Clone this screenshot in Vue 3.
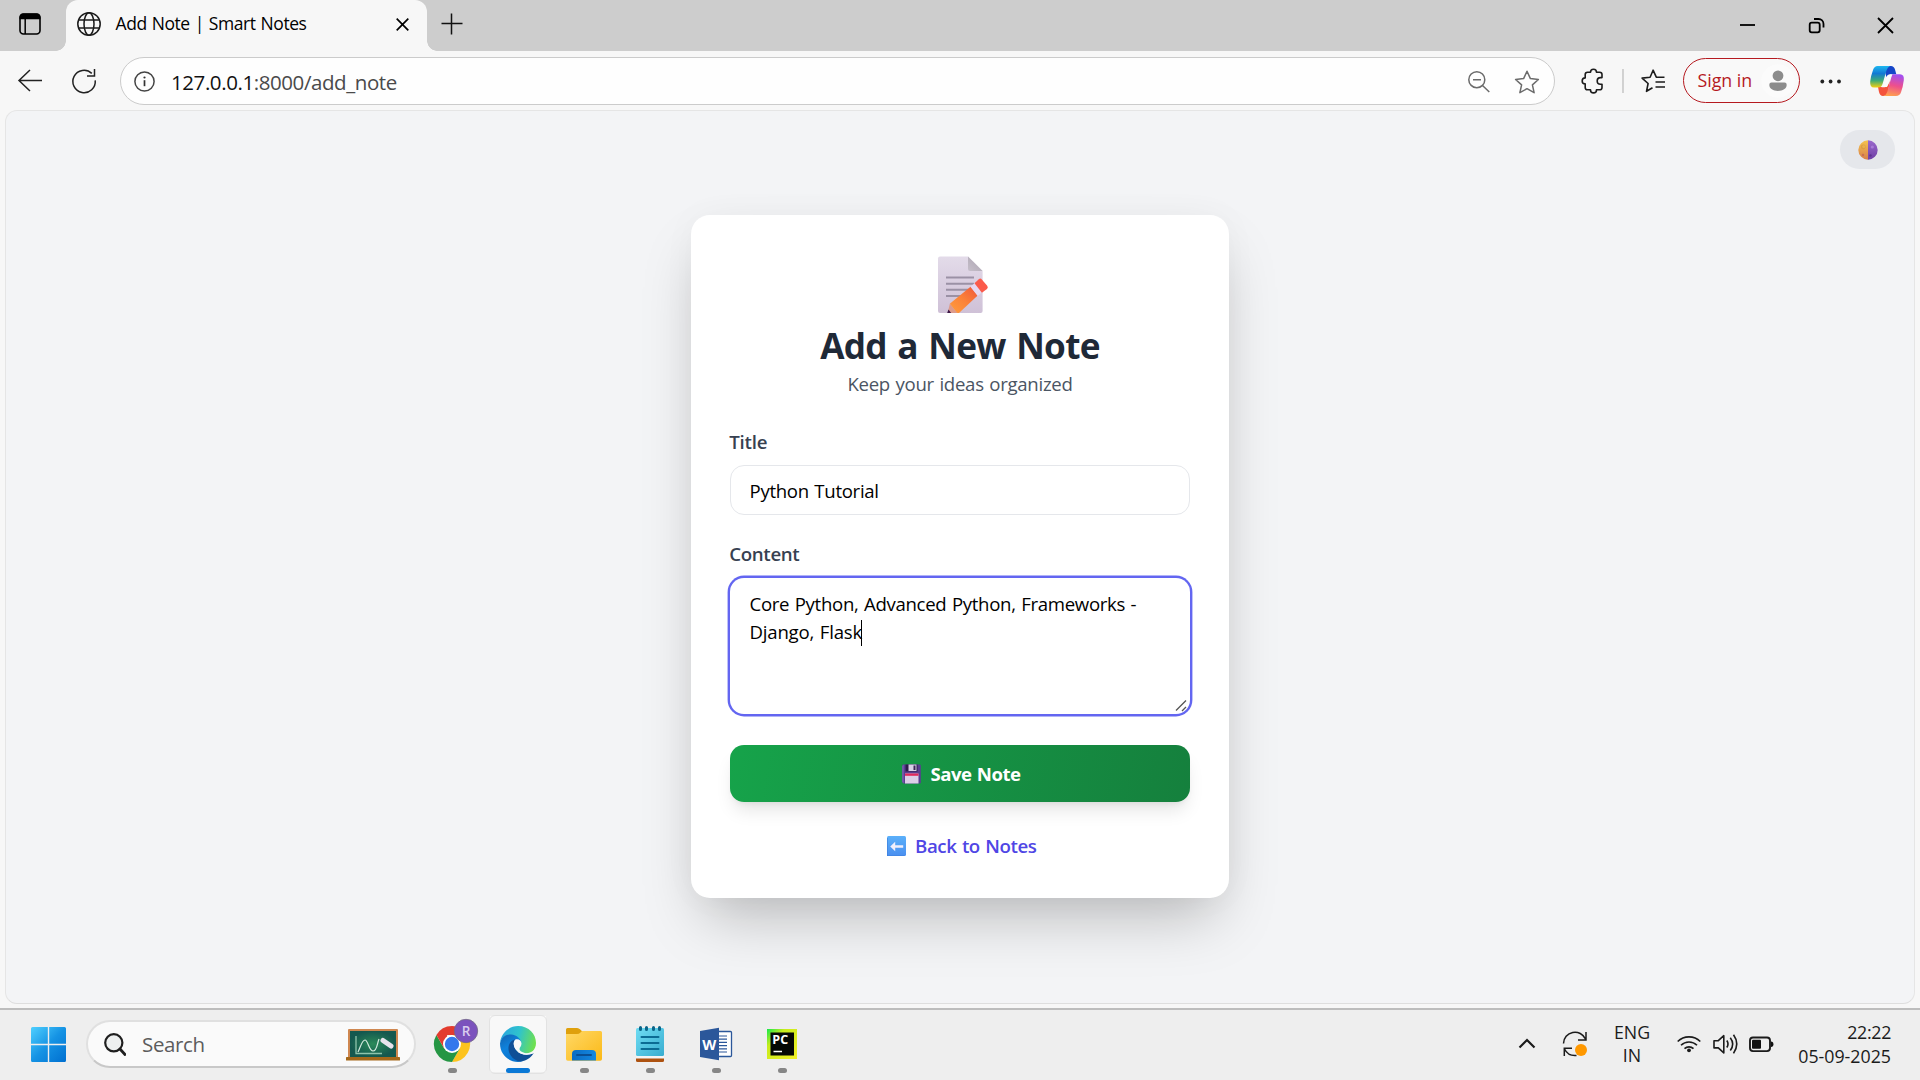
<script setup>
import { ref } from 'vue'

const title = ref('Python Tutorial')
const contentLines = ['Core Python, Advanced Python, Frameworks -', 'Django, Flask']
</script>

<template>
  <div class="screen">
    <!-- Tab strip -->
    <header class="tabstrip">
      <div class="tab-actions">
        <svg width="22" height="22" viewBox="0 0 22 22">
          <rect x="1" y="1" width="20" height="20" rx="3.5" fill="none" stroke="#000" stroke-width="1.6" />
          <path d="M.6 6.2V4A3.6 3.6 0 0 1 4.200.4h13.600A3.600 3.600 0 0 1 21.400 4v2.200z" fill="#000" />
          <path d="M6.200 6v15" stroke="#000" stroke-width="1.500" />
        </svg>
      </div>
      <div class="tab">
        <svg class="globe" width="24" height="24" viewBox="0 0 24 24" fill="none" stroke="#1b1b1b" stroke-width="1.500">
          <circle cx="12" cy="12" r="11.200" />
          <ellipse cx="12" cy="12" rx="5" ry="11.200" />
          <path d="M1.800 8h20.400M1.800 16h20.400" />
        </svg>
        <span class="tab-title">Add Note | Smart Notes</span>
        <svg class="tab-close" width="13" height="13" viewBox="0 0 13 13"><path d="M.7.7l11.600 11.600M12.300.7L.7 12.300" stroke="#000" stroke-width="1.700" /></svg>
      </div>
      <svg class="plus" width="22" height="22" viewBox="0 0 22 22"><path d="M.5 10.500h21M10.500.5v21" stroke="#111" stroke-width="1.500" /></svg>
      <div class="window-controls">
        <svg width="69" height="51" viewBox="0 0 69 51"><path d="M27 25h15" stroke="#000" stroke-width="1.800" /></svg>
        <svg width="69" height="51" viewBox="0 0 69 51" fill="none" stroke="#000" stroke-width="1.800">
          <rect x="27.700" y="22.700" width="10" height="9.600" rx="2" />
          <path d="M32 19h4.500a5 5 0 0 1 5 5v3.500" />
        </svg>
        <svg width="69" height="51" viewBox="0 0 69 51"><path d="M27 18l15 15M42 18l-15 15" stroke="#000" stroke-width="1.800" /></svg>
      </div>
    </header>

    <!-- Toolbar -->
    <div class="toolbar">
      <svg width="120" height="59" viewBox="0 51 120 59" fill="none" stroke="#222" stroke-width="1.500">
        <path d="M42 80.500H19M30 70L19 80.500 30 91" />
        <path d="M91.800 73.400A11.200 11.200 0 1 0 95.200 80.300" />
        <path d="M94.500 69v7h-7.500" />
      </svg>
      <div class="address">
        <svg width="21" height="21" viewBox="0 0 21 21">
          <circle cx="10.500" cy="10.500" r="9.600" fill="none" stroke="#444" stroke-width="1.500" />
          <path d="M10.500 9.200v6" stroke="#333" stroke-width="1.700" /><circle cx="10.500" cy="6.500" r="1.100" fill="#333" />
        </svg>
        <span class="url"><span class="host">127.0.0.1</span>:8000/add_note</span>
        <svg class="address-icons" width="74" height="28" viewBox="1467 66 74 28" fill="none" stroke="#6b6b6b" stroke-width="1.500">
          <circle cx="1476.800" cy="78.700" r="8" /><path d="M1473 78.700h8M1482.500 84.500l6.800 6.500" />
          <path stroke-linejoin="round" d="M1527 70.300l3.400 7.300 8 .9-6 5.400 1.700 7.800-7.100-4-7.100 4 1.700-7.800-6-5.400 8-.9z" />
        </svg>
      </div>
      <svg class="ext-icons" width="127" height="59" viewBox="1556 51 127 59" fill="none" stroke="#1c1c1c" stroke-width="1.600" stroke-linejoin="round">
        <path d="M1587.500 72.300h3a3 3 0 0 1 6 0h3.200q2.300 0 2.300 2.300v3h-1.500a3.300 3.300 0 0 0 0 6.600h1.500v3.200q0 2.300-2.300 2.300h-3.200v.2a3 3 0 0 1-6 0v-.2h-3q-2.300 0-2.300-2.300v-3.500a3 3 0 0 1 0-6v-3.300q0-2.300 2.300-2.300z" />
        <path d="M1623 69v24" stroke="#cdcdcd" stroke-width="1.800" />
        <path d="M1652.500 87.700l-6 3.600 1.600-7.800-6-5.400 8-.9 3-7 3.200 7h8.200M1655.500 82h9.500M1655.500 87h9.500" />
      </svg>
      <div class="signin">
        <span>Sign in</span>
        <svg width="34" height="34" viewBox="0 0 34 34">
          <circle cx="17" cy="17" r="16.700" fill="#fbfbfb" />
          <circle cx="17" cy="11.800" r="5.400" fill="#8c8c8c" />
          <path d="M10.500 18.600h13q2.200 0 2.200 2.200c0 4-4 6.200-8.700 6.200s-8.700-2.200-8.700-6.200q0-2.200 2.200-2.200z" fill="#8c8c8c" />
        </svg>
      </div>
      <svg width="120" height="59" viewBox="1800 51 120 59">
        <defs>
          <linearGradient id="cp1" x1="0" y1="0" x2="0" y2="1"><stop offset="0" stop-color="#1db8f0" /><stop offset=".35" stop-color="#1279d4" /><stop offset=".68" stop-color="#3dab78" /><stop offset="1" stop-color="#f5d011" /></linearGradient>
          <linearGradient id="cp2" x1=".5" y1="0" x2=".3" y2="1"><stop offset="0" stop-color="#a34ff0" /><stop offset=".5" stop-color="#ee4f8c" /><stop offset="1" stop-color="#ffa34d" /></linearGradient>
        </defs>
        <g fill="#222"><circle cx="1822.300" cy="81.500" r="1.900" /><circle cx="1830.600" cy="81.500" r="1.900" /><circle cx="1839" cy="81.500" r="1.900" /></g>
        <path d="M1884 66h7q3 0 4 3.500l1.300 4.700h-6q-3 0-4 3z" fill="#1546c8" />
        <path d="M1878 87h9l3-6-2 11q-1 4-5 4-3 0-4-4z" fill="#f4533c" />
        <path d="M1877.500 66h12.500q-2.500 1-3.500 4.500l-4 13.500q-1 3.500-4.500 3.500h-4q-4.300 0-3.800-6 .7-6 3-12 1.300-3.500 4.300-3.500z" fill="url(#cp1)" />
        <path d="M1892.500 74.200h7.500q4.500 0 3.800 6-.8 6.500-2.800 12-1.300 3.800-5 3.800h-12.500q2.800-1 3.700-4l4-14.300q.6-2 1.300-3.500z" fill="url(#cp2)" />
        <path d="M1888.500 75.500q1-1.300 3.500-1.300-1.500 1.300-2.200 4l-1.800 6q-1 3-3.500 3h-3q1.700-1 2.500-3.500l2-5.700q.8-2 2.500-2.500z" fill="#fafafa" />
      </svg>
    </div>

    <!-- Page -->
    <main class="viewport">
      <button class="theme-toggle" aria-label="Toggle theme">
        <svg width="20" height="20" viewBox="0 0 20 20">
          <defs>
            <linearGradient id="moonL" x1="0" y1="0" x2="0" y2="1"><stop offset="0" stop-color="#f5c34e" /><stop offset="1" stop-color="#d8804c" /></linearGradient>
            <linearGradient id="moonR" x1="0" y1="0" x2="0" y2="1"><stop offset="0" stop-color="#9a69cc" /><stop offset="1" stop-color="#6f3fa5" /></linearGradient>
          </defs>
          <path d="M10 .3a9.700 9.700 0 0 0 0 19.400z" fill="url(#moonL)" /><path d="M10 .3a9.700 9.700 0 0 1 0 19.400z" fill="url(#moonR)" />
          <circle cx="5.300" cy="7" r="2.400" fill="#dc9d42" /><circle cx="5.700" cy="6.600" r="1.500" fill="#eab24c" /><circle cx="5" cy="15" r="1.200" fill="#c86f52" />
          <circle cx="14.300" cy="7" r="1.600" fill="#a87bd6" /><circle cx="12.500" cy="15.500" r="1.200" fill="#5e3391" />
        </svg>
      </button>

      <section class="card">
        <svg class="memo" width="52" height="58" viewBox="937 256 52 58">
          <defs>
            <linearGradient id="sheet" x1="0" y1="0" x2="0" y2="1"><stop offset="0" stop-color="#e3dbe9" /><stop offset="1" stop-color="#cfc1d7" /></linearGradient>
            <linearGradient id="fold" x1="0" y1="1" x2="1" y2="0"><stop offset="0" stop-color="#c6bfca" /><stop offset="1" stop-color="#aaa2af" /></linearGradient>
            <linearGradient id="barrel" x1="0" y1="1" x2="1" y2="0"><stop offset="0" stop-color="#ff9d3d" /><stop offset=".5" stop-color="#fb8238" /><stop offset="1" stop-color="#f0563c" /></linearGradient>
            <clipPath id="memoClip"><path d="M937 256h52v57h-52z" /></clipPath>
          </defs>
          <g clip-path="url(#memoClip)">
            <path d="M940 256.500h28l14.600 14.500v40q0 2-2 2H940q-2 0-2-2v-52.500q0-2 2-2z" fill="url(#sheet)" />
            <path d="M968 256.500l14.600 14.500H970q-2 0-2-2z" fill="url(#fold)" />
            <path d="M946 277.500h28M946 283.700h28M946 289.700h24M946 296h18" stroke="#9b91a5" stroke-width="2" />
            <path d="M949.800 303.800l7.500 8.700-1.500 3.500-9 1z" fill="#dd9b8c" />
            <path d="M948.500 309.500l3 4-5 1.500z" fill="#3c1747" />
            <path d="M949.800 303.800l20.700-17 7.200 8.700-18.700 17.500h-1.700z" fill="url(#barrel)" />
            <path d="M970.500 286.800l4-3.600 7.400 9-4.200 3.800z" fill="#e6d8f1" />
            <path d="M974.500 283.200l4.300-4q1.600-1.300 3 .2l5.400 6.300q1.300 1.700-.2 3.200l-5.100 3.800z" fill="#fb5b4b" />
          </g>
        </svg>
        <h1>Add a New Note</h1>
        <p class="sub">Keep your ideas organized</p>

        <label class="label-title">Title</label>
        <div class="field">{{ title }}</div>

        <label class="label-content">Content</label>
        <div class="area">
          <div class="line">{{ contentLines[0] }}</div>
          <div class="line"><span class="last">{{ contentLines[1] }}</span><i class="caret"></i></div>
          <svg class="grip" width="13" height="13" viewBox="0 0 13 13" stroke="#555" stroke-width="1.300"><path d="M1 11.500L11 1.500M7 12l4-4" /></svg>
        </div>

        <button class="save">
          <svg width="19" height="20" viewBox="0 0 19 20">
            <path d="M1.500.5h16q1.300 0 1.300 1.300v16.400q0 1.300-1.300 1.300h-16L.2 18V1.800Q.2.5 1.500.5z" fill="#5a3e91" />
            <path d="M.2 2v16l1.500 1.500V.5z" fill="#7a5fb0" />
            <path d="M3.500.5h12v7h-12z" fill="#2c1b4a" /><path d="M6.500.5h8v6.500h-8z" fill="#d9cfe6" /><path d="M11.500 1.500h2v4.500h-2z" fill="#3a2755" />
            <path d="M3 9.500h13.500v10H3z" fill="#dccfe8" /><path d="M3 9.500h13.500v2.300H3z" fill="#e0295c" />
          </svg>
          <span>Save Note</span>
        </button>

        <a class="back">
          <svg width="19" height="20" viewBox="0 0 19 20">
            <defs><linearGradient id="arrowBg" x1="0" y1="0" x2="0" y2="1"><stop offset="0" stop-color="#5bb0fa" /><stop offset="1" stop-color="#4a8ff0" /></linearGradient></defs>
            <rect width="19" height="20" rx="1.500" fill="url(#arrowBg)" /><path d="M0 2v16.500q0 1.500 1.500 1.500h16" fill="none" stroke="#3b7edb" stroke-width="1.200" />
            <path d="M3.200 10.500l5-4.700v3.400h8v2.600h-8v3.400z" fill="#f1effb" />
          </svg>
          <span>Back to Notes</span>
        </a>
      </section>
    </main>

    <!-- Taskbar -->
    <footer class="taskbar">
      <svg class="start" width="35" height="35" viewBox="0 0 35 35">
        <defs><linearGradient id="win" x1="0" y1="0" x2="1" y2="1"><stop offset="0" stop-color="#4fd0ff" /><stop offset=".5" stop-color="#1593e4" /><stop offset="1" stop-color="#006fd0" /></linearGradient></defs>
        <path d="M1.500 0h15.300v16.800H0V1.500Q0 0 1.500 0zM18.200 0h15.300Q35 0 35 1.500v15.300H18.200zM0 18.200h16.800V35H1.500Q0 35 0 33.500zM18.200 18.200H35v15.300q0 1.500-1.500 1.500H18.200z" fill="url(#win)" />
      </svg>

      <div class="search">
        <svg width="22" height="23" viewBox="0 0 22 23" fill="none" stroke="#1f1f1f"><circle cx="9.800" cy="9.800" r="8.600" fill="#eef0f0" stroke-width="2.200" /><path d="M16 16l5 5.500" stroke-width="2.800" stroke-linecap="round" /></svg>
        <span>Search</span>
        <svg class="board" width="54" height="32" viewBox="0 0 54 32">
          <defs><radialGradient id="green"><stop offset="0" stop-color="#2b8a59" /><stop offset="1" stop-color="#14584f" /></radialGradient></defs>
          <rect x="2" width="50" height="30" rx="1" fill="#cf8750" /><rect x="4" y="2" width="46" height="26" fill="url(#green)" />
          <rect y="28" width="54" height="3.500" rx=".6" fill="#a5681a" />
          <path d="M10 7v17.500h26" fill="none" stroke="#8ec4ac" stroke-width="1.300" />
          <path d="M12 23c3-6 4-12 7-12s4 11 8 11 4-7 6-12" fill="none" stroke="#d5eadf" stroke-width="1.200" />
          <path d="M37 11.500l8 5.500" stroke="#e6e3ec" stroke-width="5" stroke-linecap="round" />
        </svg>
      </div>

      <div class="apps">
        <div class="app">
          <svg width="66" height="70" viewBox="419 1010 66 70">
            <path d="M436.400 1035A18 18 0 0 1 467.600 1035H452z" fill="#e33b2e" />
            <path d="M467.600 1035A18 18 0 0 1 452 1062l7.800-13.500L452 1035z" fill="#fcc31e" />
            <path d="M452 1062A18 18 0 0 1 436.400 1035l7.800 13.500 15.600 0z" fill="#259644" />
            <path d="M436.400 1035l7.800 13.500 3-13.500z" fill="#e33b2e" />
            <circle cx="452" cy="1044" r="9" fill="#fff" /><circle cx="452" cy="1044" r="7.200" fill="#3478ec" />
            <circle cx="466" cy="1031" r="11.700" fill="#7b52bd" stroke="#736a86" stroke-width=".8" />
            <text x="466" y="1036.200" text-anchor="middle" class="badge">R</text>
            <rect x="448" y="1068" width="9" height="5" rx="2.500" fill="#868686" />
          </svg>
        </div>
        <div class="app active">
          <svg width="66" height="70" viewBox="485 1010 66 70">
            <defs>
              <linearGradient id="edTop" x1="0" y1=".3" x2="1" y2=".5"><stop offset="0" stop-color="#2aa5df" /><stop offset=".5" stop-color="#2fc3cd" /><stop offset="1" stop-color="#6fe04e" /></linearGradient>
              <linearGradient id="edLeft" x1="0" y1="0" x2=".5" y2="1"><stop offset="0" stop-color="#1263b0" /><stop offset=".5" stop-color="#0f82dc" /><stop offset="1" stop-color="#0a72cc" /></linearGradient>
            </defs>
            <path d="M500 1043C501 1033 509 1026 518 1026C529 1026 536 1034 536 1043C536 1050 531 1053.500 525 1053.500C520 1053.500 515 1051 515 1050C519 1047 518 1038 511 1035.500C506 1034 501 1038 500 1043Z" fill="url(#edTop)" />
            <path d="M500 1043.500C501 1037 506 1034 511 1034.500C517 1035 521 1039 521.500 1043C517 1037 512 1042 512 1048C512 1056 518 1061 523 1061.200C512 1064.500 500 1056.500 500 1043.500Z" fill="url(#edLeft)" />
            <path d="M515 1039.500C509 1041 507.500 1047 509 1052C511 1058 517 1062 522 1061.300C528 1060 532 1056.500 533.700 1053C529 1055.500 521 1055.500 517 1051C514 1048 512.500 1043 515 1039.500Z" fill="#0f4f96" />
            <path d="M515 1039.700C518.500 1038.500 521.500 1040.500 521.500 1043.500C521.500 1046 519.500 1047.500 519.500 1049C519.500 1051 523 1053 527 1053.400C530 1053.500 533 1052.200 534 1051.700L533.700 1053C529 1055.500 521 1055.500 517 1051C514 1048 512.500 1043 515 1039.700Z" fill="#f8f8f8" />
            <rect x="506" y="1068" width="24" height="5" rx="2.500" fill="#0a78d6" />
          </svg>
        </div>
        <div class="app">
          <svg width="66" height="70" viewBox="551 1010 66 70">
            <defs><linearGradient id="fold2" x1="0" y1="0" x2="1" y2="1"><stop offset="0" stop-color="#ffd866" /><stop offset="1" stop-color="#fbb917" /></linearGradient>
            <linearGradient id="tray" x1="0" y1="0" x2="1" y2="0"><stop offset="0" stop-color="#0a6cc4" /><stop offset="1" stop-color="#1488e0" /></linearGradient></defs>
            <path d="M566 1029.500q0-1.500 1.500-1.500h9.500q2 0 3.300 1.500l2 2-3 4H566z" fill="#dfa00c" />
            <path d="M566 1034h11q2 0 3.500-1.500l1.500-1.500h18.500q1.500 0 1.500 1.500v26.500q0 1.800-1.800 1.800h-32.400q-1.800 0-1.800-1.800z" fill="url(#fold2)" />
            <path d="M572 1060.500v-6.500q0-4 4-4h16q4 0 4 4v6.500z" fill="url(#tray)" /><path d="M577 1055h14" stroke="#0a4f94" stroke-width="2" stroke-linecap="round" />
            <rect x="580" y="1068" width="9" height="5" rx="2.500" fill="#868686" />
          </svg>
        </div>
        <div class="app">
          <svg width="66" height="70" viewBox="617 1010 66 70">
            <defs><linearGradient id="pad" x1="0" y1="0" x2="1" y2="1"><stop offset="0" stop-color="#6fdcf3" /><stop offset="1" stop-color="#38add0" /></linearGradient></defs>
            <rect x="636" y="1050" width="28" height="12" rx="1.500" fill="#ad5210" /><rect x="636" y="1046" width="28" height="12.500" fill="#f4f4f4" />
            <rect x="636" y="1028" width="28" height="28" rx="1.500" fill="url(#pad)" />
            <path d="M641.500 1037h17M641.500 1043h17M641.500 1049h17" stroke="#0b6b94" stroke-width="2" stroke-linecap="round" />
            <path d="M640.500 1027.500v2M646.500 1027.500v2M653.500 1027.500v2M659.500 1027.500v2" stroke="#0b6488" stroke-width="3" stroke-linecap="round" />
            <rect x="646" y="1068" width="9" height="5" rx="2.500" fill="#868686" />
          </svg>
        </div>
        <div class="app">
          <svg width="66" height="70" viewBox="683 1010 66 70">
            <rect x="712" y="1031.500" width="19.500" height="25" rx="1" fill="#fff" stroke="#2b579a" stroke-width="1.300" />
            <path d="M718 1036h9M718 1039.200h9M718 1042.400h9M718 1045.600h9M718 1048.800h9M718 1052h9" stroke="#2b579a" stroke-width="1.200" />
            <path d="M700 1031l19-3.300v32.600l-19-3.300z" fill="#2b579a" />
            <text x="709.300" y="1049.700" text-anchor="middle" class="word">W</text>
            <rect x="712" y="1068" width="9" height="5" rx="2.500" fill="#868686" />
          </svg>
        </div>
        <div class="app">
          <svg width="66" height="70" viewBox="749 1010 66 70">
            <defs><linearGradient id="pc" x1="0" y1="0" x2="1" y2="1"><stop offset="0" stop-color="#14e84c" /><stop offset=".3" stop-color="#c8ec1c" /><stop offset="1" stop-color="#f2ef28" /></linearGradient></defs>
            <rect x="767" y="1029" width="30" height="30" fill="url(#pc)" /><rect x="770.500" y="1032.500" width="23.500" height="23" fill="#050805" />
            <text x="772.300" y="1043.600" class="pc">PC</text><path d="M773.500 1051.500h8.500" stroke="#fff" stroke-width="1.500" />
            <rect x="778" y="1068" width="9" height="5" rx="2.500" fill="#868686" />
          </svg>
        </div>
      </div>

      <svg class="tray-left" width="80" height="70" viewBox="1515 1010 80 70" fill="none" stroke="#1b1b1b">
        <path d="M1519.500 1047.500l7.500-7.500 7.500 7.500" stroke-width="2.200" />
        <g stroke-width="1.500"><path d="M1563.500 1043.500a11.500 11.500 0 0 1 22-4.500M1586 1032v8h-8" /><path d="M1564.300 1056v-7.700h7.700M1564.500 1049a12 12 0 0 0 12 6.500" /></g>
        <circle cx="1581" cy="1050" r="6" fill="#ff9800" stroke="none" />
      </svg>
      <div class="lang"><span>ENG</span><span>IN</span></div>
      <svg class="status" width="100" height="70" viewBox="1675 1010 100 70" fill="none" stroke="#1b1b1b" stroke-width="1.600">
        <path d="M1677.700 1041.500a16 16 0 0 1 22.600 0M1681 1045.300a11.300 11.300 0 0 1 16 0M1684.500 1048.700a6.500 6.500 0 0 1 9 0" /><circle cx="1689" cy="1050.300" r="1.900" fill="#1b1b1b" stroke="none" />
        <path d="M1714 1040.700h4.300l5.500-5v17.200l-5.500-5h-4.300z" stroke-linejoin="round" />
        <path d="M1726.800 1040.500q2.400 3.500 0 7M1730.300 1037.700q4.800 6.300 0 12.800M1733.500 1034.700q6.500 9 0 18.700" />
        <rect x="1750" y="1037.500" width="20" height="13.600" rx="3" stroke-width="1.900" /><rect x="1752" y="1039.800" width="9" height="9" rx="1" fill="#111" stroke="none" /><path d="M1771 1041.500q2.400 0 2.400 2.700t-2.400 2.800z" fill="#111" stroke="none" />
      </svg>
      <div class="clock"><span class="time">22:22</span><span class="date">05-09-2025</span></div>
    </footer>
  </div>
</template>

<style>
html, body { margin: 0; overflow: hidden; }
</style>

<style scoped>
.screen {
  width: 1920px; height: 1080px; display: flex; flex-direction: column;
  background: #f7f7f7; overflow: hidden; white-space: nowrap;
  font-family: "Open Sans", "Noto Sans", sans-serif; color: #000;
}
svg { display: block; flex: none; }

.tabstrip { height: 51px; flex: none; display: flex; background: #cdcdcd; }
.tab-actions { width: 66px; box-sizing: border-box; padding: 13px 0 0 19px; }
.tab {
  width: 361px; height: 51px; box-sizing: border-box; padding: 0 18px 0 11px;
  display: flex; align-items: center; position: relative;
  background: #f7f7f7; border-radius: 12px 12px 0 0;
}
.tab::before, .tab::after {
  content: ""; position: absolute; bottom: 0; width: 10px; height: 10px;
}
.tab::before { left: -10px; background: radial-gradient(circle at 0 0, transparent 9.500px, #f7f7f7 10px); }
.tab::after { right: -10px; background: radial-gradient(circle at 100% 0, transparent 9.500px, #f7f7f7 10px); }
.globe { margin-bottom: 3px; }
.tab-title { margin: 0 auto 0 14.500px; font-size: 17.500px; letter-spacing: -.42px; word-spacing: .8px; line-height: 24px; padding-bottom: 5px; }
.tab-close { margin-bottom: 2px; }
.plus { margin: 13px 0 0 14px; }
.window-controls { margin-left: auto; display: flex; }

.toolbar { height: 59px; flex: none; display: flex; align-items: flex-start; }
.address {
  width: 1435px; height: 48px; margin-top: 6px; box-sizing: border-box; padding: 0 13px 0 12.500px;
  display: flex; align-items: center; background: #fefefe;
  border: 1px solid #cbcbcb; border-radius: 24px;
}
.url { margin-left: 16.500px; font-size: 20.500px; letter-spacing: -.42px; line-height: 30px; color: #4a4a4a; padding-top: 1px; }
.host { color: #111; }
.address-icons { margin-left: auto; }
.ext-icons { margin-left: 1px; }
.signin {
  width: 117px; height: 45px; margin-top: 7px; box-sizing: border-box; padding: 0 4px 0 13.500px;
  display: flex; align-items: center; justify-content: space-between;
  border: 1.500px solid #b5191f; border-radius: 23px; background: #f9f9f9;
  color: #b5191f; font-size: 17.800px; letter-spacing: -.02px; line-height: 24px;
}
.signin span { padding-bottom: 1px; }

.viewport {
  width: 1910px; height: 894px; margin-left: 5px; box-sizing: border-box; flex: none;
  display: grid; justify-content: center; align-content: start;
  background: #f3f4f6; border: 1px solid #e5e5e5; border-bottom-color: #dedede; border-radius: 12px;
  position: relative;
}
.theme-toggle {
  position: absolute; top: 19px; right: 19px; width: 55px; height: 39px; padding: 1px 0 0;
  border: 0; border-radius: 20px; background: #e5e7eb;
  display: flex; align-items: center; justify-content: center;
}
.card {
  width: 538px; height: 683px; margin-top: 104px; box-sizing: border-box; padding: 41px 39px 0;
  display: flex; flex-direction: column; align-items: stretch;
  background: #fff; border-radius: 19px;
  box-shadow: 0 30px 60px -14.400px rgba(0, 0, 0, .25), 0 0 36px rgba(0, 0, 0, .03);
}
.memo { align-self: center; margin-left: 6px; }
h1 { margin: 8.500px 0 0; text-align: center; font-size: 35.200px; font-weight: 700; letter-spacing: -.7px; word-spacing: 2px; line-height: 44px; color: #1f2937; }
.sub { margin: 3.600px 0 0; text-align: center; font-size: 18.600px; letter-spacing: -.28px; word-spacing: 1px; line-height: 28px; color: #4b5563; }
.label-title, .label-content { font-size: 18.700px; font-weight: 600; line-height: 28px; color: #374151; letter-spacing: -.25px; margin-left: -.7px; }
.label-title { margin-top: 30px; }
.label-content { margin-top: 25px; letter-spacing: -.36px; }
.field {
  height: 50px; margin-top: 8.500px; box-sizing: border-box; padding: 0 18.500px;
  border: 1px solid #e5e7eb; border-radius: 14px;
  font-size: 18.600px; letter-spacing: -.3px; word-spacing: 1px; line-height: 49.500px;
}
.area {
  height: 136.500px; margin-top: 10.100px; box-sizing: border-box; padding: 12px 19.500px; position: relative;
  border-radius: 14px; box-shadow: 0 0 0 2.400px #6366f1; font-size: 18.600px;
}
.line { display: flex; align-items: center; height: 28.800px; letter-spacing: -.31px; word-spacing: 1px; line-height: 28.800px; }
.last { letter-spacing: -.2px; }
.caret { width: 1px; height: 26px; background: #000; margin-left: -1px; }
.grip { position: absolute; right: 2px; bottom: 2px; }
.save {
  height: 57px; margin-top: 31px; padding: 0 0 0 3px; border: 0; border-radius: 14px;
  display: flex; align-items: center; justify-content: center; gap: 9px;
  background: linear-gradient(100deg, #16a34a, #15803d); color: #fff;
  box-shadow: 0 12px 18px -3.600px rgba(0, 0, 0, .1), 0 4.800px 7.200px -4.800px rgba(0, 0, 0, .1);
  font: 700 18.600px/28px "Open Sans", "Noto Sans", sans-serif; letter-spacing: -.5px; word-spacing: 1px;
}
.save span { padding-top: 1px; }
.back {
  margin-top: 29.500px; padding-left: 3.500px; display: flex; align-items: center; justify-content: center; gap: 9px;
  color: #4f46e5; font-size: 18.700px; font-weight: 600; line-height: 28px; letter-spacing: -.42px; word-spacing: 1px;
}

.taskbar {
  height: 72px; margin-top: auto; flex: none; box-sizing: border-box; border-top: 2px solid #bdbdbd;
  display: flex; align-items: flex-start; background: #eee;
}
.start { margin: 17px 0 0 31px; }
.search {
  width: 330px; height: 48px; margin: 10px 0 0 20px; box-sizing: border-box; padding: 0 14px 0 16px;
  display: flex; align-items: center; background: #fafafa;
  border: 2px solid #e0e0e0; border-bottom-color: #c8c8c8; border-radius: 24px;
  font-size: 20.500px; letter-spacing: -.35px; color: #5c5c5c;
}
.search span { margin-left: 16px; line-height: 30px; }
.board { margin: 2px 0 0 auto; }
.apps { display: flex; margin-left: 3px; }
.app { width: 66px; height: 70px; }
.app.active { background: linear-gradient(#f8f8f8, #f8f8f8) 5px 6px / 56px 56px no-repeat; position: relative; }
.app.active::before {
  content: ""; position: absolute; left: 4px; top: 5px; width: 56px; height: 57px;
  border: 1px solid #e2e2e2; border-radius: 6px;
}
.app.active svg { position: relative; }
.badge { font: 600 13.500px "Open Sans", sans-serif; fill: #d9cdef; }
.word { font: 700 14.500px "Open Sans", sans-serif; fill: #fff; }
.pc { font: 700 12.500px "Open Sans", sans-serif; fill: #fff; }
.tray-left { margin-left: auto; }
.lang { width: 80px; padding-top: 11px; display: flex; flex-direction: column; align-items: center; font-size: 17.800px; line-height: 23.300px; margin-left: -3px; color: #1b1b1b; }
.status { margin-left: 3px; }
.clock { width: 145px; box-sizing: border-box; padding: 9.500px 29px 0 0; display: flex; flex-direction: column; align-items: flex-end; font-size: 17.800px; line-height: 24px; color: #1b1b1b; }
.time { letter-spacing: -.3px; }
.date { letter-spacing: 0; }
</style>
